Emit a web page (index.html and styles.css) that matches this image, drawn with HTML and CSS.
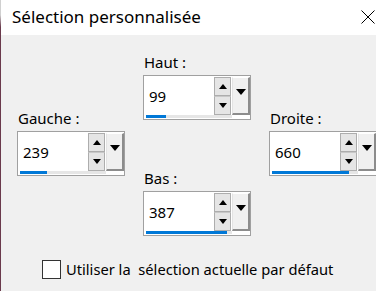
FILE: index.html
```html
<!DOCTYPE html>
<html lang="fr">
<head>
    <meta charset="UTF-8">
    <title>Sélection personnalisée</title>
    <link rel="stylesheet" href="styles.css">
</head>
<body>
    <div class="window">
        <div class="titlebar">
            <span class="title">Sélection personnalisée</span>
            <svg class="close" width="14" height="14" viewBox="0 0 14 14">
                <path d="M0.5 0.5 L13.5 13.5 M13.5 0.5 L0.5 13.5" stroke="#000" stroke-width="1" fill="none"/>
            </svg>
        </div>
        <div class="content">
            <div class="fields">
                <div class="column side">
                    <div class="field">
                        <label class="label">Gauche :</label>
                        <div class="spinbox">
                            <div class="row">
                                <span class="value">239</span>
                                <div class="spins">
                                    <span class="spin up"></span>
                                    <span class="spin down"></span>
                                </div>
                                <span class="drop"></span>
                            </div>
                            <div class="track"><div class="fill" style="width: 27px"></div></div>
                        </div>
                    </div>
                </div>
                <div class="column">
                    <div class="field">
                        <label class="label">Haut :</label>
                        <div class="spinbox">
                            <div class="row">
                                <span class="value">99</span>
                                <div class="spins">
                                    <span class="spin up"></span>
                                    <span class="spin down"></span>
                                </div>
                                <span class="drop"></span>
                            </div>
                            <div class="track"><div class="fill" style="width: 20px"></div></div>
                        </div>
                    </div>
                    <div class="field bottom">
                        <label class="label">Bas :</label>
                        <div class="spinbox">
                            <div class="row">
                                <span class="value">387</span>
                                <div class="spins">
                                    <span class="spin up"></span>
                                    <span class="spin down"></span>
                                </div>
                                <span class="drop"></span>
                            </div>
                            <div class="track"><div class="fill" style="width: 81px"></div></div>
                        </div>
                    </div>
                </div>
                <div class="column side">
                    <div class="field">
                        <label class="label">Droite :</label>
                        <div class="spinbox">
                            <div class="row">
                                <span class="value">660</span>
                                <div class="spins">
                                    <span class="spin up"></span>
                                    <span class="spin down"></span>
                                </div>
                                <span class="drop"></span>
                            </div>
                            <div class="track"><div class="fill" style="width: 77px"></div></div>
                        </div>
                    </div>
                </div>
            </div>
            <label class="check">
                <span class="box"></span>
                <span class="check-text">Utiliser la&nbsp; sélection actuelle par défaut</span>
            </label>
        </div>
    </div>
</body>
</html>
```

FILE: styles.css
```css
body {
    margin: 0;
    font-family: 'Noto Sans', sans-serif;
    color: #000;
    background-color: #f0f0f0;
}

.window {
    width: 376px;
    height: 291px;
    overflow: hidden;
    box-sizing: border-box;
    border-left: 1px solid #6a3a4c;
    border-image: linear-gradient(#d0d0d0 0, #d0d0d0 16px, #6a3a4c 28px) 1;
    background-color: #f0f0f0;
}

.titlebar {
    height: 35px;
    background-color: #fff;
    display: flex;
    align-items: center;
    justify-content: space-between;
    padding: 0 1px 0 11px;
}

.title {
    font-size: 17px;
    margin-top: -2px;
}

.close {
    margin-top: -2px;
}

.content {
    padding: 17px 0 0 16px;
}

.fields {
    display: grid;
    grid-template-columns: 108px 108px 108px;
    column-gap: 18px;
}

.column.side {
    padding-top: 56px;
}

.field.bottom {
    margin-top: 48px;
}

.label {
    display: block;
    font-size: 15px;
    line-height: 20px;
    margin-bottom: 3px;
    padding-left: 1px;
}

.spinbox {
    width: 108px;
    height: 45px;
    box-sizing: border-box;
    border: 1px solid #a0a0a0;
    background-color: #fff;
    padding: 1px 0 0 1px;
    display: flex;
    flex-direction: column;
}

.row {
    display: flex;
    height: 38px;
}

.value {
    width: 69px;
    padding-left: 4px;
    box-sizing: border-box;
    font-size: 15px;
    line-height: 38px;
}

.spins {
    width: 17px;
    display: flex;
    flex-direction: column;
}

.spin {
    height: 19px;
    box-sizing: border-box;
    border: 1px solid #adadad;
    background-color: #e5e5e5;
    display: flex;
    align-items: center;
    justify-content: center;
}

.spin.down {
    border-top-color: #c8c8c8;
}

.spin::after {
    content: "";
    width: 0;
    height: 0;
    border-left: 4px solid transparent;
    border-right: 4px solid transparent;
}

.spin.up::after {
    border-bottom: 5px solid #000;
}

.spin.down::after {
    border-top: 5px solid #000;
}

.drop {
    width: 18px;
    margin-left: 1px;
    box-sizing: border-box;
    background-color: #f0f0f0;
    border-top: 1px solid #fff;
    border-left: 1px solid #e3e3e3;
    border-right: 2px solid #8c8c8c;
    border-bottom: 2px solid #8c8c8c;
    display: flex;
    align-items: center;
    justify-content: center;
    padding-bottom: 8px;
}

.drop::after {
    content: "";
    width: 0;
    height: 0;
    border-left: 5px solid transparent;
    border-right: 5px solid transparent;
    border-top: 6px solid #000;
}

.track {
    height: 3px;
    width: 86px;
    margin-left: 1px;
    background-color: #e6e6e6;
}

.fill {
    height: 3px;
    background-color: #0078d7;
}

.check {
    display: flex;
    align-items: center;
    gap: 5px;
    margin: 23px 0 0 25px;
}

.box {
    width: 19px;
    height: 19px;
    box-sizing: border-box;
    border: 1px solid #333;
    background-color: #fff;
}

.check-text {
    font-size: 14.7px;
}
```
